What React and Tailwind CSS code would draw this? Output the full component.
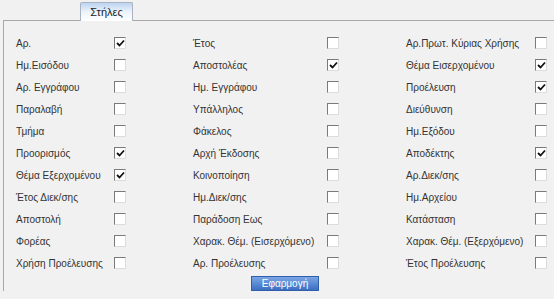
import React from 'react';

const rows = [
  [['Αρ.', true], ['Έτος', false], ['Αρ.Πρωτ. Κύριας Χρήσης', false]],
  [['Ημ.Εισόδου', false], ['Αποστολέας', true], ['Θέμα Εισερχομένου', true]],
  [['Αρ. Εγγράφου', false], ['Ημ. Εγγράφου', false], ['Προέλευση', true]],
  [['Παραλαβή', false], ['Υπάλληλος', false], ['Διεύθυνση', false]],
  [['Τμήμα', false], ['Φάκελος', false], ['Ημ.Εξόδου', false]],
  [['Προορισμός', true], ['Αρχή Έκδοσης', false], ['Αποδέκτης', true]],
  [['Θέμα Εξερχομένου', true], ['Κοινοποίηση', false], ['Αρ.Διεκ/σης', false]],
  [['Έτος Διεκ/σης', false], ['Ημ.Διεκ/σης', false], ['Ημ.Αρχείου', false]],
  [['Αποστολή', false], ['Παράδοση Εως', false], ['Κατάσταση', false]],
  [['Φορέας', false], ['Χαρακ. Θέμ. (Εισερχόμενο)', false], ['Χαρακ. Θέμ. (Εξερχόμενο)', false]],
  [['Χρήση Προέλευσης', false], ['Αρ. Προέλευσης', false], ['Έτος Προέλευσης', false]],
];

const Box = ({ checked }) => (
  <span className="w-[12px] h-[12px] shrink-0 bg-white border border-t-[#7a7a7a] border-l-[#7a7a7a] border-r-[#dcdcdc] border-b-[#dcdcdc] flex items-center justify-center">
    {checked && (
      <svg width="9" height="9" viewBox="0 0 9 9">
        <path d="M1 4 L3.5 6.5 L8 1.5" stroke="#111" strokeWidth="1.8" fill="none" />
      </svg>
    )}
  </span>
);

const Cell = ({ label, checked, cellW, labelW, pad }) => (
  <div className={`flex items-center shrink-0 ${cellW} ${pad}`}>
    <span className={`${labelW} shrink-0 whitespace-nowrap`}>{label}</span>
    <Box checked={checked} />
  </div>
);

export default function App() {
  return (
    <div className="w-[554px] h-[299px] bg-[#f2f1f1] overflow-hidden text-[10px] text-[#333] font-['Liberation_Sans',Arial,sans-serif]">
      <div className="pl-[80px] pt-[2px] flex">
        <div className="w-[53px] h-[19px] border border-b-0 border-[#a9b3c2] rounded-t-[2px] bg-gradient-to-b from-[#bcd3f0] via-[#eef4fc] to-white flex items-center justify-center text-[11px] text-[#222] -mb-px relative">
          Στήλες
        </div>
      </div>
      <div className="ml-[3px] border-t border-l border-[#a8a8a8] pt-[11px]">
        {rows.map((r, i) => (
          <div key={i} className="flex h-[22px] items-center">
            <Cell label={r[0][0]} checked={r[0][1]} cellW="w-[189px]" labelW="w-[98px]" pad="pl-[12px]" />
            <Cell label={r[1][0]} checked={r[1][1]} cellW="w-[213px]" labelW="w-[134px]" pad="" />
            <Cell label={r[2][0]} checked={r[2][1]} cellW="w-[148px]" labelW="w-[129px]" pad="" />
          </div>
        ))}
        <div className="pl-[247px] pt-[2px]">
          <button className="w-[68px] h-[15px] border border-[#2f5fa8] bg-gradient-to-b from-[#7aa6e4] to-[#3b6fc2] text-white text-[10px] leading-none flex items-center justify-center">
            Εφαρμογή
          </button>
        </div>
      </div>
    </div>
  );
}
